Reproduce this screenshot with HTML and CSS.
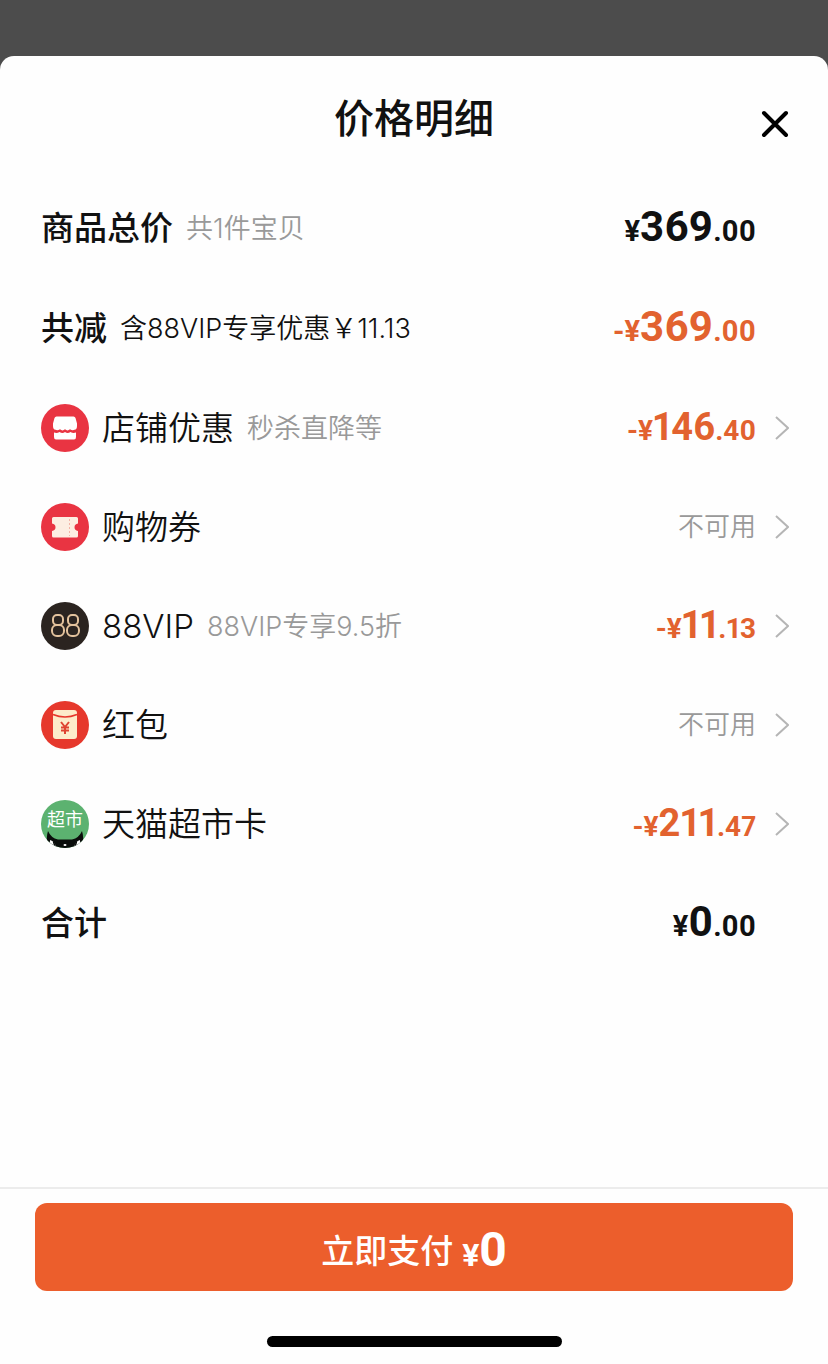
FILE: index.html
```
<!DOCTYPE html>
<html lang="zh-CN">
<head>
  <meta charset="UTF-8" />
  <meta name="viewport" content="width=device-width, initial-scale=1.0" />
  <title>价格明细</title>
  <link rel="stylesheet" href="styles.css">
</head>
<body>

  <main class="sheet">
    <header class="sheet-header">
      <h1>价格明细</h1>
      <button class="btn-close" type="button" aria-label="关闭">
        <svg viewBox="0 0 28 28" width="28" height="28"><path d="M3 3L25 25M25 3L3 25" /></svg>
      </button>
    </header>

    <ul class="price-list">
      <li class="row summary">
        <span class="label">商品总价</span>
        <span class="note">共1件宝贝</span>
        <span class="price"><small>¥</small>369<small>.00</small></span>
      </li>
      <li class="row summary">
        <span class="label">共减</span>
        <span class="note dark">含88VIP专享优惠￥11.13</span>
        <span class="price discount"><small>-¥</small>369<small>.00</small></span>
      </li>
      <li>
        <button class="row" type="button">
          <svg class="icon" viewBox="0 0 48 48">
            <circle cx="24" cy="24" r="24" fill="#e93442" />
            <path d="M15.500 12.500H32.500Q34 12.500 34.500 14L36 19.500V22Q36 25.500 33.500 25.800Q31.500 26.800 29 25.300Q26.500 27.500 24 25.300Q21.500 27.500 19 25.300Q16.500 26.800 14.500 25.800Q12 25.500 12 22V19.500L13.500 14Q14 12.500 15.500 12.500Z" fill="#fff" />
            <path d="M13 28.500Q16 29.500 18.500 28Q21.500 30 24 28Q26.500 30 29.500 28Q32 29.500 35 28.500V33Q35 35.500 33 35.500H15Q13 35.500 13 33Z" fill="#fff" />
          </svg>
          <span class="label">店铺优惠</span>
          <span class="note">秒杀直降等</span>
          <span class="price discount"><small>-¥</small>146<small>.40</small></span>
          <svg class="arrow" viewBox="0 0 14 24"><path d="M1 1L13 12L1 23" /></svg>
        </button>
      </li>
      <li>
        <button class="row" type="button">
          <svg class="icon" viewBox="0 0 48 48">
            <circle cx="24" cy="24" r="24" fill="#e93442" />
            <path d="M12.500 14H35.500Q37 14 37 15.500V20.500Q33.500 21 33.500 24.300Q33.500 27.500 37 28V33Q37 34.500 35.500 34.500H12.500Q11 34.500 11 33V28Q14.500 27.500 14.500 24.300Q14.500 21 11 20.500V15.500Q11 14 12.500 14Z" fill="#fdeee2" />
            <path d="M28.500 16V33" stroke="#f3b5a8" stroke-width="1" stroke-dasharray="2 2" />
          </svg>
          <span class="label">购物券</span>
          <span class="unavailable">不可用</span>
          <svg class="arrow" viewBox="0 0 14 24"><path d="M1 1L13 12L1 23" /></svg>
        </button>
      </li>
      <li>
        <button class="row" type="button">
          <svg class="icon" viewBox="0 0 48 48">
            <circle cx="24" cy="24" r="24" fill="#2b2420" />
            <g fill="none" stroke="#e3c29c" stroke-width="2">
              <rect x="12" y="13" width="10" height="10" rx="4" />
              <rect x="11" y="23" width="12" height="11" rx="5" />
              <rect x="27" y="13" width="10" height="10" rx="4" />
              <rect x="26" y="23" width="12" height="11" rx="5" />
            </g>
          </svg>
          <span class="label">88VIP</span>
          <span class="note">88VIP专享9.5折</span>
          <span class="price discount"><small>-¥</small>11<small>.13</small></span>
          <svg class="arrow" viewBox="0 0 14 24"><path d="M1 1L13 12L1 23" /></svg>
        </button>
      </li>
      <li>
        <button class="row" type="button">
          <svg class="icon" viewBox="0 0 48 48">
            <circle cx="24" cy="24" r="24" fill="#e6382c" />
            <rect x="12" y="9" width="24" height="29" rx="3" fill="#fdecca" />
            <path d="M12 13.500Q24 18.500 36 13.500" fill="none" stroke="#e6382c" stroke-width="1.500" />
            <path d="M20 21L24 26L28 21M24 26V33M20 26.500H28M20 29.500H28" fill="none" stroke="#df4430" stroke-width="2" />
          </svg>
          <span class="label">红包</span>
          <span class="unavailable">不可用</span>
          <svg class="arrow" viewBox="0 0 14 24"><path d="M1 1L13 12L1 23" /></svg>
        </button>
      </li>
      <li>
        <button class="row" type="button">
          <svg class="icon" viewBox="0 0 48 48">
            <clipPath id="card-clip"><circle cx="24" cy="24" r="24" /></clipPath>
            <g clip-path="url(#card-clip)">
              <rect width="48" height="48" fill="#5cb270" />
              <path d="M7 31Q10 38 17 39.500H31Q38 38 41 31Q43 37 42 48H6Q5 37 7 31Z" fill="#0a0d0b" />
              <path d="M9 40Q14 41 15 48H12Q8 46 9 40ZM39 40Q34 41 33 48H36Q40 46 39 40Z" fill="#fff" />
              <path d="M12.500 41.500L14 47M35.500 41.500L34 47" stroke="#0a0d0b" stroke-width="1.500" />
              <ellipse cx="24" cy="45" rx="1.500" ry="1" fill="#fff" />
            </g>
            <text class="icon-text" x="24" y="26" text-anchor="middle">超市</text>
          </svg>
          <span class="label">天猫超市卡</span>
          <span class="price discount"><small>-¥</small>211<small>.47</small></span>
          <svg class="arrow" viewBox="0 0 14 24"><path d="M1 1L13 12L1 23" /></svg>
        </button>
      </li>
      <li class="row summary">
        <span class="label">合计</span>
        <span class="price"><small>¥</small>0<small>.00</small></span>
      </li>
    </ul>

    <footer class="pay-bar">
      <button class="btn-pay" type="button">立即支付 <span class="pay-price"><small>¥</small>0</span></button>
      <div class="home-indicator"></div>
    </footer>
  </main>

</body>
</html>
```
FILE: styles.css
```
* {
  margin: 0;
  padding: 0;
  box-sizing: border-box;
}

body {
  min-height: 100vh;
  padding-top: 56px;
  display: flex;
  background: #4c4c4c;
  color: #111;
  font-family: Inter, "Noto Sans CJK SC", sans-serif;
}

button {
  border: none;
  background: none;
  color: inherit;
  font: inherit;
  cursor: pointer;
}

.sheet {
  flex: 1;
  display: flex;
  flex-direction: column;
  background: #fefefe;
  border-radius: 14px 14px 0 0;
}

/* Cabecera */
.sheet-header {
  display: grid;
  grid-template-columns: 1fr auto 1fr;
  padding: 33px 39px 29px;
}

.sheet-header h1 {
  grid-column: 2;
  font-size: 40px;
  font-weight: 500;
  line-height: 60px;
}

.btn-close {
  justify-self: end;
  align-self: end;
  height: 50px;
}

.btn-close svg {
  display: block;
  fill: none;
  stroke: #000;
  stroke-width: 4;
  stroke-linecap: round;
}

/* Lista */
.price-list {
  flex: 1;
  list-style: none;
}

.row {
  width: 100%;
  height: 99px;
  padding: 0 39px 0 41px;
  display: flex;
  align-items: center;
  text-align: left;
}

.row.summary {
  height: 100px;
  padding-right: 72px;
}

.icon {
  width: 48px;
  height: 48px;
  margin-right: 13px;
}

.icon-text {
  font-size: 18px;
  fill: #fff;
}

.label {
  font-size: 33px;
  font-weight: 350;
  line-height: 48px;
}

.summary .label {
  font-weight: 500;
}

.note {
  margin-left: 13px;
  padding-top: 2px;
  color: #999;
  font-size: 27px;
  font-weight: 350;
  line-height: 40px;
}

.note.dark {
  color: #111;
}

.price,
.unavailable {
  margin-left: auto;
}

.unavailable {
  color: #999;
  font-size: 26px;
  font-weight: 350;
  line-height: 40px;
}

.price {
  padding-top: 2px;
  font-family: Roboto, sans-serif;
  font-size: 38px;
  font-weight: 700;
  font-variant-numeric: proportional-nums;
  line-height: 48px;
}

.summary .price {
  font-size: 42px;
}

.price small {
  font-size: 28px;
}

.summary .price small {
  font-size: 29px;
}

.discount {
  color: #e2622f;
}

.arrow {
  width: 14px;
  height: 24px;
  margin-left: 19px;
  fill: none;
  stroke: #b5b5b5;
  stroke-width: 2;
}

/* Pie */
.pay-bar {
  padding: 14px 35px 17px;
  border-top: 2px solid #ececec;
}

.btn-pay {
  width: 100%;
  height: 88px;
  padding-top: 4px;
  display: flex;
  align-items: center;
  justify-content: center;
  gap: 9px;
  border-radius: 12px;
  background: #ec5e2c;
  color: #fff;
  font-size: 33px;
  font-weight: 500;
}

.pay-price {
  font-family: Roboto, sans-serif;
  font-size: 48px;
  font-weight: 700;
}

.pay-price small {
  font-size: 32px;
}

.home-indicator {
  width: 295px;
  height: 11px;
  margin: 45px auto 0;
  border-radius: 6px;
  background: #000;
}
```
